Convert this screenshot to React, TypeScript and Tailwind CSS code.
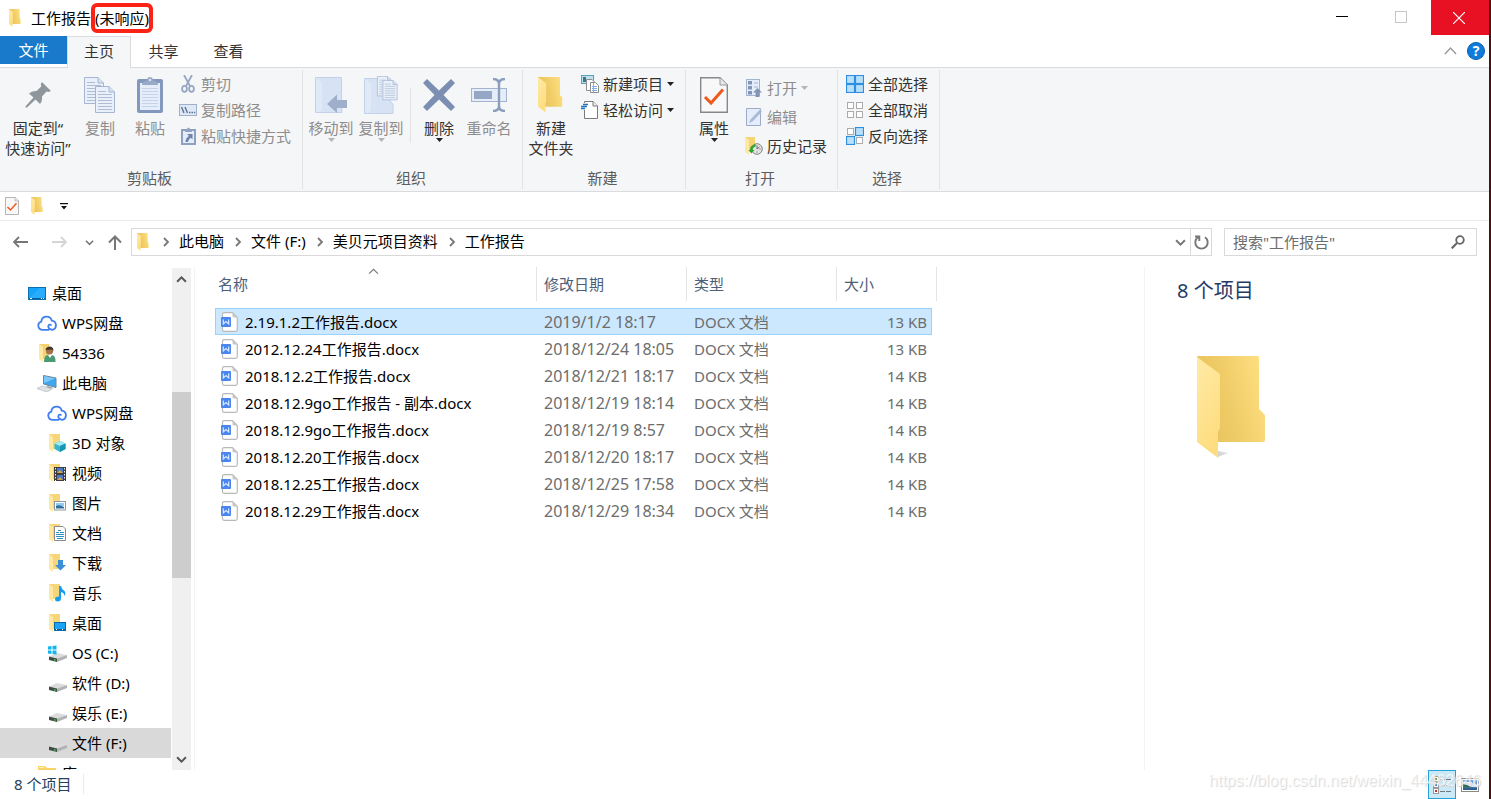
import React from "react";

type IconProps = { className?: string };

function Folder({ className = "w-[13px] h-[18px]", big = false }: IconProps & { big?: boolean }) {
  return (
    <svg className={className} viewBox="0 0 76 104" preserveAspectRatio="none" aria-hidden="true">
      <defs>
        <linearGradient id="folderBack" x1="0" y1="0.3" x2="1" y2="0">
          <stop offset="0" stopColor="#e8c25c" />
          <stop offset="0.4" stopColor="#f0cd68" />
          <stop offset="1" stopColor="#ffe184" />
        </linearGradient>
        <linearGradient id="folderFront" x1="0" y1="0" x2="0.4" y2="1">
          <stop offset="0" stopColor="#ffeaa6" />
          <stop offset="1" stopColor="#fedd80" />
        </linearGradient>
        <linearGradient id="folderShade" x1="0" y1="0" x2="1" y2="0">
          <stop offset="0" stopColor="#b8b8b8" stopOpacity="0.6" />
          <stop offset="1" stopColor="#e0e0e0" stopOpacity="0" />
        </linearGradient>
      </defs>
      {big && <path d="M21 101 L31 97 L21 95 Z M68 85 L76 82 L68 80 Z" fill="url(#folderShade)" />}
      <path d="M0 1 Q0 0 1 0 H61 Q62 0 62 2 V53 L67 58 Q68 59 68 60 V84 Q68 86 66 86 H10 Z" fill="url(#folderBack)" />
      <path d="M0 1 L23 18 V72 L21 76 V102 L0 86 Z" fill="url(#folderFront)" />
    </svg>
  );
}

function Chevron({ dir, className = "w-2 h-2 text-[#5f5f5f]", thin = false }: IconProps & { dir: "up" | "down" | "right"; thin?: boolean }) {
  const d = dir === "up" ? "M1 7 L5 3 L9 7" : dir === "down" ? "M1 3 L5 7 L9 3" : "M3 1 L7 5 L3 9";
  return (
    <svg className={className} viewBox="0 0 10 10" fill="none" stroke="currentColor" strokeWidth={thin ? 1 : 1.8} aria-hidden="true">
      <path d={d} />
    </svg>
  );
}

function Caret({ className = "text-[#222]" }: IconProps) {
  return (
    <svg className={`w-[7px] h-1 shrink-0 ${className}`} viewBox="0 0 7 4" aria-hidden="true">
      <path d="M0 0 H7 L3.5 4 Z" fill="currentColor" />
    </svg>
  );
}

/* ---------- ribbon icons ---------- */

const PinIcon = () => (
  <svg className="w-7 h-7" viewBox="0 0 28 28" aria-hidden="true">
    <path d="M18 1 L27 10 L24.5 11 L22.5 10.5 L18 15.5 Q18.5 20 16 23 L11.5 18.5 L3 26.5 L1.5 26.8 L1.8 25 L9.5 16.5 L5 12.5 Q8 9.5 12.5 10 L17.2 5.5 L16.8 3 Z" fill="#90979c" />
  </svg>
);

const Sheet = ({ x, y }: { x: number; y: number }) => (
  <g transform={`translate(${x} ${y})`}>
    <path d="M.5 .5 H14 L19.5 6 V26.5 H.5 Z" fill="#e9f0fa" stroke="#a5b5d2" />
    <path d="M14 .5 V6 H19.5" fill="#d5e0f1" stroke="#a5b5d2" />
    <path d="M3 5.5 H11 M3 8.5 H17 M3 11.5 H17 M3 14.5 H17 M3 17.5 H17 M3 20.5 H17 M3 23.5 H17" stroke="#afbdd7" />
  </g>
);

const CopyIcon = () => (
  <svg className="w-8 h-9" viewBox="0 0 32 36" aria-hidden="true">
    <Sheet x={0} y={0} />
    <Sheet x={11} y={9} />
  </svg>
);

const PasteIcon = () => (
  <svg className="w-7 h-9" viewBox="0 0 28 36" aria-hidden="true">
    <rect x="1" y="2" width="26" height="34" rx="2" fill="#8497bd" />
    <path d="M4 6 H24 V33 H4 Z" fill="#e4edf9" />
    <path d="M6 11.5 H22 M6 14.5 H22 M6 17.5 H22 M6 20.5 H22 M6 23.5 H22 M6 26.5 H22 M6 29.5 H22" stroke="#c5d3e8" />
    <path d="M6 8 Q6 4 11 3.5 Q11 0 14 0 Q17 0 17 3.5 Q22 4 22 8 Z" fill="#99a9c8" />
    <circle cx="14" cy="3" r="1.2" fill="#dce6f4" />
  </svg>
);

const CutIcon = () => (
  <svg className="w-[14px] h-[18px]" viewBox="0 0 14 18" fill="none" stroke="#97a7c2" strokeWidth="1.8" aria-hidden="true">
    <path d="M3 0 L9 11 M11 0 L5 11" />
    <ellipse cx="3.5" cy="13.8" rx="2.4" ry="3" />
    <ellipse cx="10.5" cy="13.8" rx="2.4" ry="3" />
  </svg>
);

const PathIcon = () => (
  <svg className="w-[18px] h-3" viewBox="0 0 18 12" aria-hidden="true">
    <rect x=".5" y=".5" width="17" height="11" fill="#dfe8f6" stroke="#9fb0cb" />
    <path d="M2.5 3 L5 9 M6 3 L8.5 9" stroke="#5d7096" strokeWidth="1.4" />
    <path d="M10 8.5 H11.5 M12.5 8.5 H14 M15 8.5 H16.2" stroke="#5d7096" strokeWidth="1.5" />
  </svg>
);

const ShortcutIcon = () => (
  <svg className="w-[15px] h-[18px]" viewBox="0 0 15 18" aria-hidden="true">
    <path d="M1 3 H14 V17 H1 Z" fill="#e4edf9" stroke="#8fa0c0" strokeWidth="2" />
    <path d="M4 5 Q4 2.5 6 2 Q7.5 -1 9 2 Q11 2.5 11 5 Z" fill="#8fa0c0" />
    <path d="M6 7 H11.5 V12.5 L9.8 10.8 Q7.5 12 7 15 H4.5 Q4.5 11 8 9 Z" fill="#6f83ab" />
  </svg>
);

const MoveIcon = () => (
  <svg className="w-8 h-9" viewBox="0 0 32 36" aria-hidden="true">
    <path d="M.5 .5 H26.5 V28 L27 35.5 H.5 Z" fill="#d7e3f5" stroke="#c3d2e8" />
    <path d="M1 1 L7 6 V31 L5 35 L1 34 Z" fill="#dfe9f8" />
    <path d="M12 27 L22 17.5 V23 H32 V31 H22 V36 Z" fill="#9fafcb" />
  </svg>
);

const CopyToIcon = () => (
  <svg className="w-[34px] h-[38px]" viewBox="0 0 34 38" aria-hidden="true">
    <path d="M.5 2.5 H26.5 V26 Q30 26 29 37.5 H.5 Z" fill="#d7e3f5" stroke="#c3d2e8" />
    <path d="M1 3 L7 8 V33 L5 37 L1 36 Z" fill="#dfe9f8" />
    <g transform="translate(13 0) scale(.75)"><Sheet x={0} y={0} /></g>
    <g transform="translate(18.5 4) scale(.75)"><Sheet x={0} y={0} /></g>
  </svg>
);

const DeleteIcon = () => (
  <svg className="w-8 h-8" viewBox="0 0 32 32" aria-hidden="true">
    <path d="M4 0 L16 11.5 L28 0 L32 4 L20.5 16 L32 28 L28 32 L16 20.5 L4 32 L0 28 L11.5 16 L0 4 Z" fill="#7c8fb3" />
  </svg>
);

const RenameIcon = () => (
  <svg className="w-9 h-[34px]" viewBox="0 0 36 34" fill="none" aria-hidden="true">
    <rect x=".5" y="10.5" width="35" height="13" fill="#e4edf9" stroke="#a3b4d0" />
    <rect x="3" y="13" width="18" height="8" fill="#96a7c6" />
    <path d="M22 1 Q28 1 28 6 V28 Q28 33 22 33 M34 1 Q28 1 28 6 M28 28 Q28 33 34 33" stroke="#8b9dbd" strokeWidth="2.4" />
  </svg>
);

const NewItemIcon = () => (
  <svg className="w-[18px] h-[18px]" viewBox="0 0 18 18" aria-hidden="true">
    <rect x=".5" y=".5" width="12" height="8" fill="#bfe0ee" stroke="#5b9fb9" />
    <rect x="2" y="2" width="3" height="5" fill="#39768a" />
    <path d="M5.5 4.5 H11 L13.5 7 V15.5 H5.5 Z" fill="#fff" stroke="#8d8d8d" />
    <path d="M9.5 7.5 H14.5 L17.5 10.5 V17.5 H9.5 Z" fill="#fff" stroke="#8d8d8d" />
    <path d="M11 11.5 H16 M11 13.5 H16 M11 15.5 H16" stroke="#7fb1e6" />
    <path d="M12.5 8 V17" stroke="#ec8989" />
  </svg>
);

const EasyAccessIcon = () => (
  <svg className="w-[18px] h-[18px]" viewBox="0 0 18 18" aria-hidden="true">
    <path d="M3.5 .5 H12 L16.500 5 V17.500 H3.5 Z" fill="#fff" stroke="#7a7a7a" />
    <path d="M12 .5 V5 H16.5" fill="#eee" stroke="#7a7a7a" />
    <rect x="2" y="2" width="4" height="7" fill="#f5f6f7" />
    <path d="M2 3.500 H7 M0 5.500 H6 M0 7.500 H4" stroke="#2577bd" strokeWidth="1.3" />
  </svg>
);

const CheckSheet = ({ className = "w-7 h-9" }: IconProps) => (
  <svg className={className} viewBox="0 0 28 36" aria-hidden="true">
    <path d="M.7 .7 H20 L27.3 8 V35.3 H.7 Z" fill="#f8f8f8" stroke="#888" strokeWidth="1.4" />
    <path d="M20 .7 V8 H27.3" fill="#e8e8e8" stroke="#999" />
    <path d="M5 20 L11 26 L23 12.5" fill="none" stroke="#ee5a1c" strokeWidth="3" />
  </svg>
);

const OpenIcon = () => (
  <svg className="w-4 h-[18px]" viewBox="0 0 16 18" aria-hidden="true">
    <rect x=".5" y=".5" width="13" height="16" fill="#e4edf9" stroke="#a3b4d0" />
    <path d="M2 2 H6 V5.5 H2 Z M2 7 H6 V10.5 H2 Z M2 12 H6 V15.5 H2 Z" fill="#8496b8" />
    <path d="M8 4 H12 M8 8 H12" stroke="#a3b4d0" />
    <path d="M11.5 9 L16 13.5 H13.5 V18 H9.5 V13.5 H7 Z" fill="#8496b8" />
  </svg>
);

const EditIcon = () => (
  <svg className="w-4 h-[18px]" viewBox="0 0 16 18" aria-hidden="true">
    <path d="M.5 .5 H14.5 V17.5 H.5 Z" fill="#e4edf9" stroke="#9cacc8" />
    <path d="M3 15 L4.5 11.5 L14 1.5 L16 3.5 L6.5 13.5 Z" fill="#a9bad6" />
  </svg>
);

const HistoryIcon = () => (
  <svg className="w-[18px] h-[18px]" viewBox="0 0 18 18" aria-hidden="true">
    <path d="M0 0 H10 V9 L12 11 V15 H2 Z" fill="#f5d372" />
    <path d="M0 0 L4 3 V18 L0 15 Z" fill="#ffe8a0" />
    <circle cx="12" cy="12" r="5.3" fill="#e3e3e3" stroke="#838383" />
    <path d="M12 8.5 V12 L14.5 10 M12 15.5 V14.5 M15.5 12 H14.5" stroke="#666" fill="none" />
    <path d="M5 13 Q5 7.5 11 7.5 L10.5 9.5 Q7.8 10 7.7 13 H9.5 L6.5 16.5 L3.5 13 Z" fill="#2fa52f" />
  </svg>
);

function SquaresIcon({ on }: { on: boolean[] }) {
  return (
    <svg className="w-[18px] h-[18px]" viewBox="0 0 18 18" aria-hidden="true">
      {on.map((active, i) => {
        const x = (i % 2) * 9;
        const y = Math.floor(i / 2) * 9;
        return active ? (
          <rect key={i} x={x + 0.5} y={y + 0.5} width="8" height="8" fill="#b9e0fb" stroke="#2e8fe0" strokeWidth="1.2" />
        ) : (
          <rect key={i} x={x + 1.5} y={y + 1.5} width="6" height="6" fill="#fff" stroke="#ababab" />
        );
      })}
    </svg>
  );
}

/* ---------- ribbon parts ---------- */

type BigProps = { icon: React.ReactNode; lines: string[]; width?: string; muted?: boolean; caret?: boolean };

function BigButton({ icon, lines, width = "w-[50px]", muted, caret }: BigProps) {
  return (
    <button type="button" className={`flex flex-col items-center ${width} ${muted ? "text-[#8d8d8d]" : "text-[#333]"}`}>
      <span className="flex h-[42px] items-center justify-center pb-1">{icon}</span>
      {lines.map((l) => (
        <span key={l} className="leading-5 whitespace-nowrap">{l}</span>
      ))}
      {caret && <Caret className={muted ? "text-[#b5b5b5]" : "text-[#222]"} />}
    </button>
  );
}

type SmallProps = { icon: React.ReactNode; label: string; muted?: boolean; caret?: boolean; height?: string };

function SmallButton({ icon, label, muted, caret, height = "h-[26px]" }: SmallProps) {
  return (
    <button type="button" className={`flex items-center whitespace-nowrap ${height} ${muted ? "text-[#8d8d8d]" : "text-[#333]"}`}>
      <span className="mr-1 flex w-[18px] shrink-0 justify-center">{icon}</span>
      {label}
      {caret && <span className="ml-1"><Caret className={muted ? "text-[#b5b5b5]" : "text-[#222]"} /></span>}
    </button>
  );
}

function Group({ title, width, children }: { title: string; width: string; children: React.ReactNode }) {
  return (
    <section className={`flex shrink-0 flex-col border-r border-[#e2e3e4] ${width}`} aria-label={title}>
      <div className="flex flex-1 items-start">{children}</div>
      <div className="pr-[3px] pb-px text-center leading-5 text-[#5c5c5c]">{title}</div>
    </section>
  );
}

/* ---------- navigation tree icons ---------- */

const Monitor = () => (
  <svg className="w-[18px] h-[13px]" viewBox="0 0 18 13" aria-hidden="true">
    <rect x=".5" y=".5" width="17" height="12" fill="#16a4fb" stroke="#0a6fae" />
    <path d="M1 11 L12 1 H17 V11 Z" fill="#36b3ff" opacity=".6" />
    <path d="M1 11.5 H17" stroke="#0c5d97" />
    <path d="M2 11.5 H4 M13 11.5 H14 M15 11.5 H16" stroke="#fff" />
  </svg>
);

const Cloud = () => (
  <svg className="w-5 h-4" viewBox="0 0 20 16" fill="none" stroke="#3f7ff0" strokeWidth="1.8" strokeLinecap="round" aria-hidden="true">
    <path d="M11.5 14.8 H5 A4.200 4.200 0 0 1 4.300 6.600 A5.300 5.300 0 0 1 14.700 5.600 A4.700 4.700 0 0 1 15.500 14.800 Q11.300 14.500 11.300 11.300 Q11.800 9 13.800 9.800" />
  </svg>
);

const UserIcon = () => (
  <svg className="w-[17px] h-[18px]" viewBox="0 0 17 18" aria-hidden="true">
    <path d="M0 0 H10 V15 H2 Z" fill="#f4d172" /><path d="M0 0 L4 3 V18 L0 15 Z" fill="#ffe8a0" />
    <path d="M5 18 Q5 11 9 11 L13 11 Q17 12 16.5 18 Z" fill="#4a9a76" />
    <path d="M9 11 L11 14 L13 11 Z" fill="#fff" />
    <circle cx="10.5" cy="7" r="3.6" fill="#a8714c" />
    <path d="M6.5 6 Q7 2.5 11 2.5 Q15 3 14.3 7 L13 5.5 Z" fill="#43352d" />
  </svg>
);

const PcIcon = () => (
  <svg className="w-5 h-[17px]" viewBox="0 0 20 17" aria-hidden="true">
    <path d="M6.5 .5 L19 3 V12.5 L6.5 9 Z" fill="#3da7ef" stroke="#6e8797" />
    <path d="M7 1 L18 3.5 L7 8 Z" fill="#7cc8f8" />
    <path d="M9 10.5 L14 12 L17 13.5 L11 13 Z" fill="#9aa4ab" />
    <path d="M0 13.5 L5 11 L15 14 L10 17 Z" fill="#dfe3e6" stroke="#aab0b5" strokeWidth=".6" />
  </svg>
);

function TreeFolder({ children }: { children?: React.ReactNode }) {
  return (
    <svg className="w-[17px] h-[18px]" viewBox="0 0 17 18" aria-hidden="true">
      <path d="M0 0 H11 V9 L12 10 V15 H2 Z" fill="#f6d679" />
      <path d="M0 0 L4 3 V18 L0 15 Z" fill="#ffe8a0" />
      {children}
    </svg>
  );
}

function Drive({ windows = false }: { windows?: boolean }) {
  return (
    <svg className="w-[19px] h-[17px]" viewBox="0 0 19 17" aria-hidden="true">
      <path d="M1 11.500 L9 8 L19 10 L9 13.500 Z" fill="#dcdcdc" />
      {windows && <path d="M0 1.500 L3.500 1 V4.500 H0 Z M4.500 .9 L8.500 .4 V4.500 H4.500 Z M0 5.500 H3.500 V9 L0 8.500 Z M4.500 5.500 H8.500 V9.600 L4.500 9.100 Z" fill="#10b5ee" />}
      <path d="M1 11.500 L9 13.500 V17 L1 15 Z" fill="#444a46" />
      <path d="M9 13.500 L19 10 V13 L9 17 Z" fill="#b0b2b4" />
      <path d="M6 14.800 L7.500 15.200" stroke="#35d345" strokeWidth="1.5" />
    </svg>
  );
}

const cubeIcon = <TreeFolder><path d="M5.5 9.5 L11 7 L16.5 9.5 V15 L11 18 L5.5 15 Z" fill="#35b5cf" /><path d="M5.5 9.5 L11 7 L16.5 9.5 L11 12 Z" fill="#a0ecf4" /><path d="M11 12 L16.5 9.5 V15 L11 18 Z" fill="#1596b3" /></TreeFolder>;
const videoIcon = <TreeFolder><rect x="5" y="3" width="12" height="14" fill="#3c3c3c" /><path d="M8 4 H14 V9 H8 Z M8 11 H14 V16 H8 Z" fill="#4b79c9" /><path d="M8 9 L11 6 L14 9 M8 16 L11 13 L14 16" fill="#d7a34a" /><path d="M6.5 4 V17 M15.5 4 V17" stroke="#eee" strokeDasharray="1.5 1.5" /></TreeFolder>;
const pictureIcon = <TreeFolder><rect x="5.5" y="7.5" width="11" height="8.5" fill="#fff" stroke="#8e979e" /><path d="M7 9 H15 V12 H7 Z" fill="#8fcdf0" /><path d="M7 12 Q10 10 15 13 V14.5 H7 Z" fill="#2f6f9e" /></TreeFolder>;
const docIcon = <TreeFolder><path d="M5.5 2.5 H14 L16.5 5 V16.5 H5.5 Z" fill="#fff" stroke="#8a8a8a" /><path d="M9 6.5 H12 M7 8.5 H10 M11 8.5 H15 M7 10.5 H15 M7 12.5 H15 M8 14.5 H14" stroke="#2f8fc2" /></TreeFolder>;
const downloadIcon = <TreeFolder><path d="M9 6 H14 V11 H17 L11.5 16.5 L6 11 H9 Z" fill="#3a8fdb" /></TreeFolder>;
const musicIcon = <TreeFolder><path d="M10 2 H12 Q12.5 5 15 6.5 Q17.5 8.5 15.5 12 Q15 8.5 12 8 V14 Q12 17.5 8.5 17.5 Q6 17.5 6 15.3 Q6 12.5 10 12.5 Z" fill="#129df0" /></TreeFolder>;
const deskIcon = <TreeFolder><rect x="5.5" y="8.5" width="11" height="8" fill="#1ba3f7" stroke="#0b6aa5" /><path d="M6 15.5 H16" stroke="#0c5d97" /><path d="M7 15.5 H8 M13 15.5 H14" stroke="#fff" /></TreeFolder>;
const libraryIcon = (
  <svg className="w-[18px] h-[15px]" viewBox="0 0 18 15" aria-hidden="true">
    <path d="M0 0 H7 L9 2 H18 V15 H0 Z" fill="#fbd465" />
    <path d="M1 1.5 H6" stroke="#fff1bf" /><path d="M0 5 H18 V15 H0 Z" fill="#fde391" />
  </svg>
);

type TreeItem = { label: string; icon: React.ReactNode; level: 0 | 1 | 2; selected?: boolean };

const tree: TreeItem[] = [
  { label: "桌面", icon: <Monitor />, level: 0 },
  { label: "WPS网盘", icon: <Cloud />, level: 1 },
  { label: "54336", icon: <UserIcon />, level: 1 },
  { label: "此电脑", icon: <PcIcon />, level: 1 },
  { label: "WPS网盘", icon: <Cloud />, level: 2 },
  { label: "3D 对象", icon: cubeIcon, level: 2 },
  { label: "视频", icon: videoIcon, level: 2 },
  { label: "图片", icon: pictureIcon, level: 2 },
  { label: "文档", icon: docIcon, level: 2 },
  { label: "下载", icon: downloadIcon, level: 2 },
  { label: "音乐", icon: musicIcon, level: 2 },
  { label: "桌面", icon: deskIcon, level: 2 },
  { label: "OS (C:)", icon: <Drive windows />, level: 2 },
  { label: "软件 (D:)", icon: <Drive />, level: 2 },
  { label: "娱乐 (E:)", icon: <Drive />, level: 2 },
  { label: "文件 (F:)", icon: <Drive />, level: 2, selected: true },
  { label: "库", icon: libraryIcon, level: 1 },
];

const levelPadding = ["pl-[27px]", "pl-[37px]", "pl-[47px]"];

const files = [
  ["2.19.1.2工作报告.docx", "2019/1/2 18:17", "13 KB"],
  ["2012.12.24工作报告.docx", "2018/12/24 18:05", "13 KB"],
  ["2018.12.2工作报告.docx", "2018/12/21 18:17", "14 KB"],
  ["2018.12.9go工作报告 - 副本.docx", "2018/12/19 18:14", "14 KB"],
  ["2018.12.9go工作报告.docx", "2018/12/19 8:57", "14 KB"],
  ["2018.12.20工作报告.docx", "2018/12/20 18:17", "14 KB"],
  ["2018.12.25工作报告.docx", "2018/12/25 17:58", "14 KB"],
  ["2018.12.29工作报告.docx", "2018/12/29 18:34", "14 KB"],
];

const WordDoc = () => (
  <svg className="w-[17px] h-5 shrink-0" viewBox="0 0 17 20" aria-hidden="true">
    <path d="M3 .7 H11.5 L16.3 5.5 V17.5 Q16.3 19.3 14.5 19.3 H3 Q1.5 19.3 1.5 17.5 V2.5 Q1.5 .7 3 .7 Z" fill="#fff" stroke="#b9b9b9" strokeWidth="1.2" />
    <path d="M11.5 .7 V4 Q11.5 5.5 13 5.5 H16.3 Z" fill="#c6c6c6" />
    <rect x="0" y="5" width="10" height="10" rx="1" fill="#4a86f0" />
    <path d="M2.3 7.5 V12 L5 9.5 L7.7 12 V7.5" fill="none" stroke="#dbe8ff" strokeWidth="1.2" />
  </svg>
);

const crumbs = ["此电脑", "文件 (F:)", "美贝元项目资料", "工作报告"];

export default function App() {
  return (
    <div
      lang="zh-CN"
      className="relative flex h-screen flex-col overflow-hidden border-r-2 border-[#4a1114] bg-white font-['Noto_Sans','Noto_Sans_CJK_SC',sans-serif] text-[15px] leading-5 text-black"
    >
      {/* Title bar */}
      <header className="flex h-9 shrink-0 items-start">
        <div className="flex h-[35px] items-center pl-[9px]">
          <Folder />
          <h1 className="ml-[9px] whitespace-nowrap">
            工作报告{" "}
            <span className="relative">
              (未响应)
              <span className="absolute -inset-x-1 -inset-y-[5px] rounded-md border-4 border-[#fb2216]" />
            </span>
          </h1>
        </div>
        <div className="ml-auto flex">
          <button type="button" aria-label="最小化" className="flex h-[33px] w-[58px] items-center justify-center">
            <span className="h-px w-3 bg-black" />
          </button>
          <button type="button" aria-label="最大化" className="flex h-[33px] w-[60px] items-center justify-center">
            <span className="h-3 w-3 border border-[#c6c6c6]" />
          </button>
          <button type="button" aria-label="关闭" className="flex h-[35px] w-[58px] items-center justify-center bg-[#e81123] pr-[2px]">
            <svg className="h-3 w-3" viewBox="0 0 12 12" stroke="#fff" strokeWidth="1.2" aria-hidden="true">
              <path d="M0 0 L12 12 M12 0 L0 12" />
            </svg>
          </button>
        </div>
      </header>

      {/* Ribbon tabs */}
      <nav className="flex h-8 shrink-0 items-stretch border-b border-[#dadbdc] text-[#333]">
        <button type="button" className="mb-[3px] w-[67px] bg-[#1979ca] text-white">文件</button>
        <button type="button" className="-mb-px w-16 border border-b-0 border-[#dadbdc] bg-[#f5f6f7] pb-[3px]">主页</button>
        <button type="button" className="w-[65px] pb-px">共享</button>
        <button type="button" className="w-[65px] pb-px">查看</button>
        <div className="ml-auto flex items-center gap-[10px] pr-1 pb-px">
          <button type="button" aria-label="折叠功能区">
            <svg className="h-3 w-[13px]" viewBox="0 0 13 12" fill="none" stroke="#999" strokeWidth="1.4" aria-hidden="true">
              <path d="M1 9 L6.5 3 L12 9" />
            </svg>
          </button>
          <button type="button" aria-label="帮助" className="flex h-[18px] w-[18px] items-center justify-center rounded-full border border-[#0a5ea8] bg-[#0f7bdc] text-sm font-bold text-white">
            ?
          </button>
        </div>
      </nav>

      {/* Ribbon */}
      <div className="flex h-[124px] shrink-0 border-b border-[#dadbdc] bg-[#f5f6f7] py-[2px]">
        <Group title="剪贴板" width="w-[303px]">
          <div className="flex pt-[6px] pl-px">
            <BigButton width="w-[74px]" icon={<PinIcon />} lines={["固定到“", "快速访问”"]} />
            <BigButton icon={<CopyIcon />} lines={["复制"]} muted />
            <BigButton icon={<PasteIcon />} lines={["粘贴"]} muted />
          </div>
          <div className="flex flex-col pt-px pl-1">
            <SmallButton icon={<CutIcon />} label="剪切" muted />
            <SmallButton icon={<PathIcon />} label="复制路径" muted />
            <SmallButton icon={<ShortcutIcon />} label="粘贴快捷方式" muted />
          </div>
        </Group>
        <Group title="组织" width="w-[220px]">
          <div className="flex pt-[6px] pl-[3px]">
            <BigButton icon={<MoveIcon />} lines={["移动到"]} muted caret />
            <BigButton icon={<CopyToIcon />} lines={["复制到"]} muted caret />
            <div className="mr-[3px] ml-1 mt-3 h-[55px] w-px bg-[#e2e3e4]" />
            <BigButton icon={<DeleteIcon />} lines={["删除"]} caret />
            <BigButton icon={<RenameIcon />} lines={["重命名"]} muted />
          </div>
        </Group>
        <Group title="新建" width="w-[163px]">
          <div className="flex pt-[6px] pl-[3px]">
            <BigButton icon={<Folder className="h-9 w-[27px]" />} lines={["新建", "文件夹"]} />
          </div>
          <div className="flex flex-col pt-px pl-[5px]">
            <SmallButton icon={<NewItemIcon />} label="新建项目" caret />
            <SmallButton icon={<EasyAccessIcon />} label="轻松访问" caret />
          </div>
        </Group>
        <Group title="打开" width="w-[152px]">
          <div className="flex pt-[6px] pl-[3px]">
            <BigButton icon={<CheckSheet />} lines={["属性"]} caret />
          </div>
          <div className="flex flex-col pt-[3px] pl-[6px]">
            <SmallButton height="h-[29px]" icon={<OpenIcon />} label="打开" muted caret />
            <SmallButton height="h-[29px]" icon={<EditIcon />} label="编辑" muted />
            <SmallButton height="h-[29px]" icon={<HistoryIcon />} label="历史记录" />
          </div>
        </Group>
        <Group title="选择" width="w-[102px]">
          <div className="flex flex-col pt-px pl-2">
            <SmallButton icon={<SquaresIcon on={[true, true, true, true]} />} label="全部选择" />
            <SmallButton icon={<SquaresIcon on={[false, false, false, false]} />} label="全部取消" />
            <SmallButton icon={<SquaresIcon on={[false, true, true, false]} />} label="反向选择" />
          </div>
        </Group>
      </div>

      {/* Quick access toolbar */}
      <div className="flex h-[29px] shrink-0 items-center border-b border-[#ebebeb] pl-[5px]">
        <button type="button" aria-label="属性"><CheckSheet className="h-[18px] w-[14px]" /></button>
        <button type="button" aria-label="新建文件夹" className="ml-3"><Folder /></button>
        <button type="button" aria-label="自定义快速访问工具栏" className="ml-4">
          <svg className="h-[7px] w-2" viewBox="0 0 8 7" aria-hidden="true">
            <path d="M0 0 H8 V1.3 H0 Z M1 3 H7 L4 6.5 Z" fill="#111" />
          </svg>
        </button>
      </div>

      {/* Address bar */}
      <div className="flex h-[46px] shrink-0 items-center pr-3 pb-1 pl-[13px]">
        <button type="button" aria-label="后退">
          <svg className="h-3 w-[15px]" viewBox="0 0 15 12" fill="none" stroke="#777" strokeWidth="1.8" aria-hidden="true"><path d="M15 6 H1 M6 1 L1 6 L6 11" /></svg>
        </button>
        <button type="button" aria-label="前进" className="ml-6">
          <svg className="h-3 w-[15px]" viewBox="0 0 15 12" fill="none" stroke="#d5d5d5" strokeWidth="1.8" aria-hidden="true"><path d="M0 6 H14 M9 1 L14 6 L9 11" /></svg>
        </button>
        <button type="button" aria-label="最近的位置" className="ml-[18px]"><Chevron dir="down" className="h-[9px] w-[9px] text-[#777]" /></button>
        <button type="button" aria-label="上移" className="ml-[14px]">
          <svg className="h-[15px] w-[14px]" viewBox="0 0 14 15" fill="none" stroke="#777" strokeWidth="2" aria-hidden="true"><path d="M7 15 V1.5 M1 7.5 L7 1.5 L13 7.5" /></svg>
        </button>
        <div className="ml-[9px] flex h-7 flex-1 items-center border border-[#d9d9d9] pl-[5px]">
          <Folder />
          {crumbs.map((c, i) => (
            <React.Fragment key={c}>
              <span className={i === 0 ? "mr-2 ml-[11px]" : "mr-2 ml-[9px]"}><Chevron dir="right" className="h-[10px] w-[10px] text-[#777]" /></span>
              <a href="#" className="pb-[2px] whitespace-nowrap">{c}</a>
            </React.Fragment>
          ))}
          <button type="button" aria-label="上一个位置" className="mr-1 ml-auto"><Chevron dir="down" className="h-[11px] w-[11px] text-[#777]" /></button>
          <button type="button" aria-label="刷新" className="flex h-full w-[21px] items-center justify-center border-l border-[#d9d9d9]">
            <svg className="h-[15px] w-[15px]" viewBox="0 0 15 15" fill="none" stroke="#777" strokeWidth="1.9" aria-hidden="true">
              <path d="M11 2.3 A6.2 6.2 0 1 1 4 2.3 M1 1.5 H5.3 V6" />
            </svg>
          </button>
        </div>
        <div className="ml-3 flex h-7 w-[253px] items-center border border-[#d9d9d9] pr-[11px] pl-2">
          <input aria-label="搜索" placeholder={'搜索"工作报告"'} className="min-w-0 flex-1 outline-none placeholder:text-[#6d6d6d]" />
          <svg className="h-[14px] w-[14px]" viewBox="0 0 14 14" fill="none" stroke="#666" aria-hidden="true">
            <circle cx="9" cy="5" r="3.8" strokeWidth="1.8" />
            <path d="M6 8 L.7 13.3" strokeWidth="2.2" />
          </svg>
        </div>
      </div>

      {/* Body */}
      <div className="flex min-h-0 flex-1">
        <aside className="flex w-[195px] shrink-0 border-r border-[#f3f3f3]">
          <ul className="min-w-0 flex-1 overflow-hidden pt-[11px]">
            {tree.map((t, i) => (
              <li key={i} className="pr-px">
                <a href="#" className={`flex h-[30px] items-center whitespace-nowrap ${levelPadding[t.level]} ${t.selected ? "bg-[#d9d9d9]" : ""}`}>
                  <span className="mr-[5px] flex w-5 justify-center">{t.icon}</span>
                  {t.label}
                </a>
              </li>
            ))}
          </ul>
          <div className="mt-px mr-[3px] flex w-[19px] flex-col items-center bg-[#f0f0f0]">
            <span className="flex h-[22px] items-center"><Chevron dir="up" className="h-[11px] w-[11px] text-[#555]" /></span>
            <div className="grow-[102]" />
            <div className="w-full grow-[186] bg-[#cdcdcd]" />
            <div className="grow-[170]" />
            <span className="flex h-[22px] items-center"><Chevron dir="down" className="h-[11px] w-[11px] text-[#555]" /></span>
          </div>
        </aside>

        <main className="min-w-0 flex-1 pl-5">
          <table className="w-[722px] table-fixed border-separate border-spacing-0 text-left whitespace-nowrap">
            <colgroup>
              <col className="w-[322px]" />
              <col className="w-[150px]" />
              <col className="w-[150px]" />
              <col className="w-[95px]" />
              <col className="w-[5px]" />
            </colgroup>
            <thead className="text-[#4c607a]">
              <tr className="h-[41px] align-top">
                <th className="p-0 font-normal">
                  <div className="relative flex h-[34px] items-center border-r border-[#e5e5e5] pl-[3px]">
                    名称
                    <Chevron dir="up" thin className="absolute -top-px left-[153px] h-[11px] w-[11px] text-[#777]" />
                  </div>
                </th>
                <th className="p-0 font-normal"><div className="flex h-[34px] items-center border-r border-[#e5e5e5] pl-[7px]">修改日期</div></th>
                <th className="p-0 font-normal"><div className="flex h-[34px] items-center border-r border-[#e5e5e5] pl-[7px]">类型</div></th>
                <th colSpan={2} className="p-0 font-normal"><div className="flex h-[34px] items-center border-r border-[#e5e5e5] pl-[7px]">大小</div></th>
              </tr>
            </thead>
            <tbody>
              {files.map(([name, date, size], i) => {
                const cell = i === 0 ? "border-y border-[#99d1ff] bg-[#cce8ff]" : "";
                return (
                  <tr key={name} className="h-[27px]">
                    <td className={`p-0 ${cell} ${i === 0 ? "border-l pl-[5px]" : "pl-[6px]"}`}>
                      <div className="flex items-center gap-[7px]"><WordDoc />{name}</div>
                    </td>
                    <td className={`p-0 pl-[7px] text-base leading-5 text-[#6d6d6d] ${cell}`}>{date}</td>
                    <td className={`p-0 pl-[7px] text-[#6d6d6d] ${cell}`}>DOCX 文档</td>
                    <td className={`p-0 text-right text-[#6d6d6d] ${cell} ${i === 0 ? "border-r pr-1" : "pr-[5px]"}`}>{size}</td>
                    <td className="p-0" />
                  </tr>
                );
              })}
            </tbody>
          </table>
        </main>

        <aside className="w-[345px] shrink-0 border-l border-[#f3f3f3] pl-8">
          <h2 className="mt-[10px] text-xl leading-7 text-[#1f3c66]">8 个项目</h2>
          <Folder big className="mt-[51px] ml-5 h-[104px] w-[76px]" />
        </aside>
      </div>

      {/* Status bar */}
      <footer className="flex h-[29px] shrink-0 items-center text-[#26415f]">
        <span className="mb-[2px] border-r border-[#ebebeb] pr-3 pl-[14px]">8 个项目</span>
        <div className="ml-auto flex h-full items-center pr-[10px]">
          <button type="button" aria-label="详细信息" className="flex h-full w-7 items-center justify-center border border-[#26a0da] bg-[#cbe8f6]">
            <svg className="h-[18px] w-[18px]" viewBox="0 0 18 18" aria-hidden="true">
              {["#6a8f3d", "#3b79c4", "#c8321e"].map((c, i) => (
                <g key={c} transform={`translate(0 ${i * 6})`}>
                  <rect x=".5" y=".5" width="5" height="5" fill="#fff" stroke="#999" />
                  <rect x="2" y="2" width="2" height="2" fill={c} />
                  <path d="M7 3.5 H12 M13 3.5 H18" stroke="#6d7a80" />
                </g>
              ))}
            </svg>
          </button>
          <button type="button" aria-label="大缩略图" className="ml-[5px]">
            <svg className="h-[14px] w-[18px]" viewBox="0 0 18 14" aria-hidden="true">
              <rect x=".5" y=".5" width="17" height="13" fill="#fff" stroke="#8a8a8a" />
              <rect x="2" y="2" width="14" height="10" fill="#5c93d8" />
              <path d="M2 4 Q9 3 16 7 V9 H2 Z" fill="#d6e8f5" />
              <path d="M2 6 Q8 7 12 9.5 H2 Z" fill="#3a6b45" />
              <path d="M2 9.5 H16 V12 H2 Z" fill="#2f5f8e" />
            </svg>
          </button>
        </div>
      </footer>

      <div className="pointer-events-none absolute right-2 bottom-2 font-['Liberation_Sans',Arial,sans-serif] text-base leading-5 text-white/70 [text-shadow:1px_1px_1px_#d6d6d6]">
        https://blog.csdn.net/weixin_44462646
      </div>
    </div>
  );
}
